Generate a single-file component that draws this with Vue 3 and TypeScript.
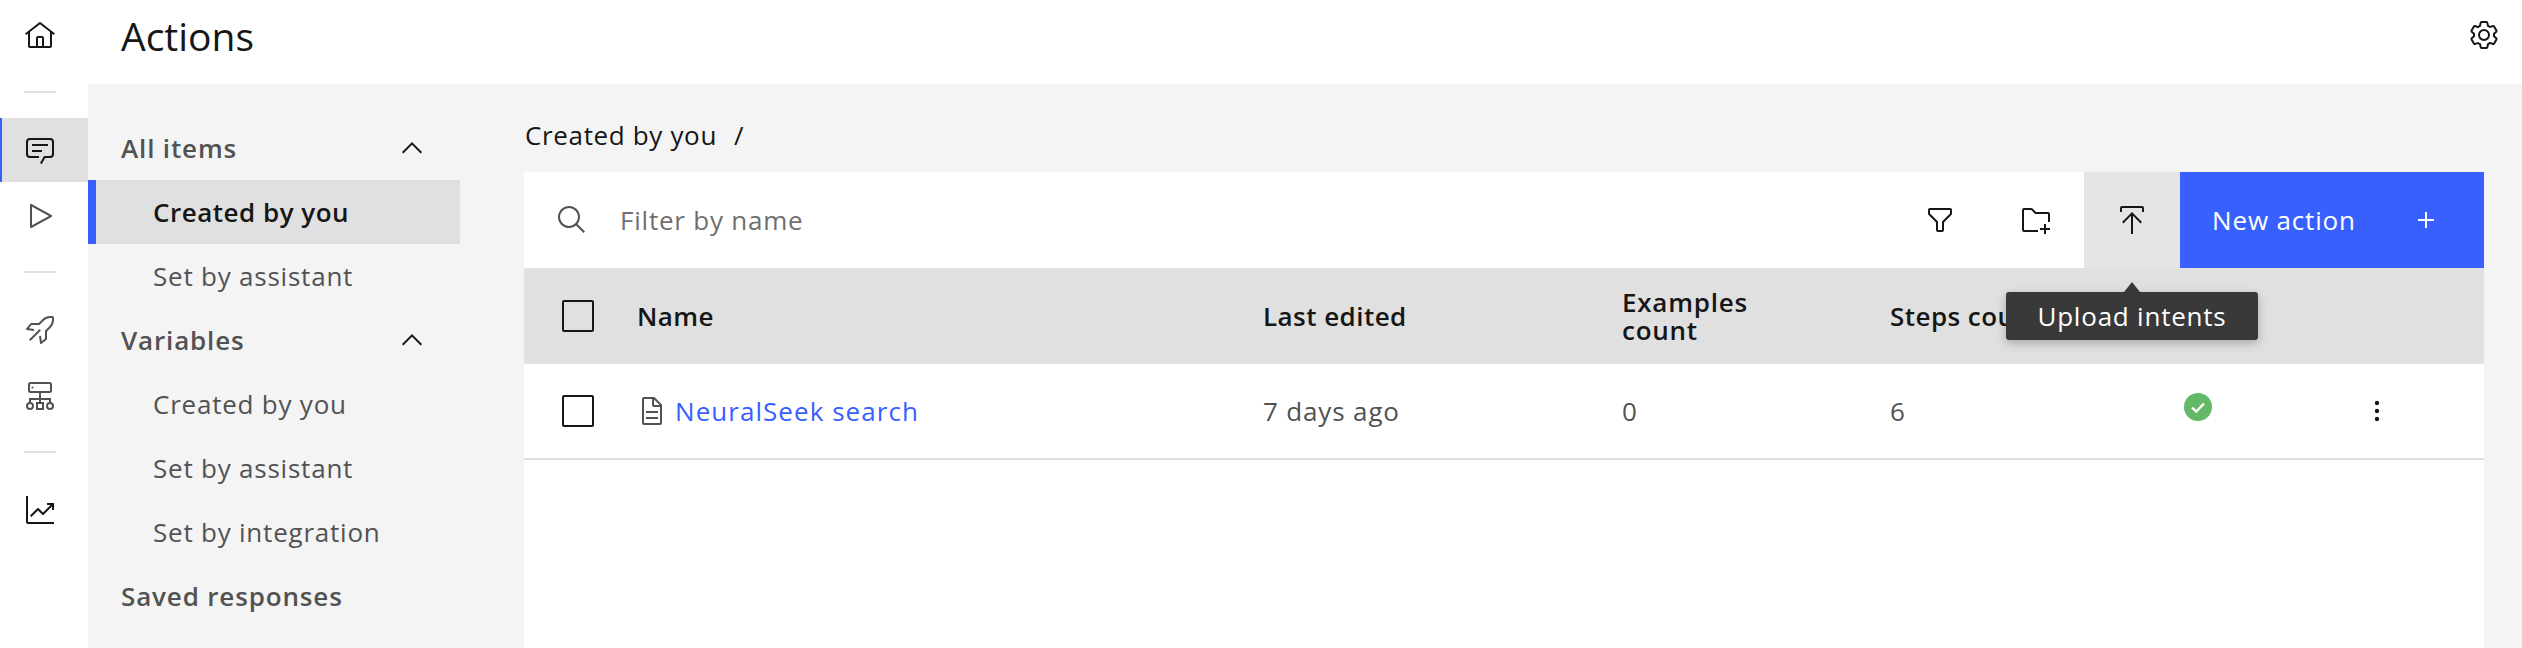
<template>
  <div class="page">
    <aside class="rail">
      <a class="rail-item">
        <svg class="ic dark" viewBox="0 0 32 32"><path d="M16.6123,2.2138a1.01,1.01,0,0,0-1.2427,0L1,13.4194l1.2427,1.5717L4,13.6209V26a2.0041,2.0041,0,0,0,2,2H26a2.0037,2.0037,0,0,0,2-2V13.63L29.7573,15,31,13.4282ZM18,26H14V18h4Zm2,0V18a2.0023,2.0023,0,0,0-2-2H14a2.002,2.002,0,0,0-2,2v8H6V12.0615l10-7.79,10,7.8005V26Z" /></svg>
      </a>
      <div class="rail-sep"></div>
      <a class="rail-item active">
        <svg class="ic dark" viewBox="0 0 32 32"><path d="M17.74,30,16,29l4-7h6a2,2,0,0,0,2-2V8a2,2,0,0,0-2-2H6A2,2,0,0,0,4,8V20a2,2,0,0,0,2,2h9v2H6a4,4,0,0,1-4-4V8A4,4,0,0,1,6,4H26a4,4,0,0,1,4,4V20a4,4,0,0,1-4,4H21.16Z" /><path d="M8 10H24V12H8z" /><path d="M8 16H18V18H8z" /></svg>
      </a>
      <a class="rail-item">
        <svg class="ic grey" viewBox="0 0 32 32"><path d="M7,28a1,1,0,0,1-1-1V5a1,1,0,0,1,1.4819-.8763l20,11a1,1,0,0,1,0,1.7525l-20,11A1.0005,1.0005,0,0,1,7,28ZM8,6.6909V25.3088L24.9248,16Z" /></svg>
      </a>
      <div class="rail-sep"></div>
      <a class="rail-item">
        <svg class="ic grey" viewBox="0 0 32 32"><path d="M17,30a1,1,0,0,1-.37-.07,1,1,0,0,1-.62-.79l-1-7,2-.28.75,5.27L21,24.52V17a1,1,0,0,1,.29-.71l4.07-4.07A8.94,8.94,0,0,0,28,5.86V4H26.14a8.94,8.94,0,0,0-6.36,2.64l-4.07,4.07A1,1,0,0,1,15,11H7.48L4.87,14.26l5.27.75-.28,2-7-1a1,1,0,0,1-.79-.62,1,1,0,0,1,.15-1l4-5A1,1,0,0,1,7,9h7.59l3.77-3.78A10.92,10.92,0,0,1,26.14,2H28a2,2,0,0,1,2,2V5.86a10.92,10.92,0,0,1-3.22,7.78L23,17.41V25a1,1,0,0,1-.38.78l-5,4A1,1,0,0,1,17,30Z" /><path d="M5.76 26.24 16.24 15.76" fill="none" stroke="#525252" stroke-width="2" /></svg>
      </a>
      <a class="rail-item">
        <svg class="ic grey" viewBox="0 0 32 32"><rect x="5" y="3" width="22" height="9" rx="1.5" fill="none" stroke="#525252" stroke-width="2" /><circle cx="8.5" cy="7.5" r="1" /><path d="M16 12V23M6 23V19H26V23" fill="none" stroke="#525252" stroke-width="2" /><circle cx="6" cy="26" r="3" fill="none" stroke="#525252" stroke-width="2" /><rect x="13" y="23" width="6" height="6" fill="none" stroke="#525252" stroke-width="2" /><circle cx="26" cy="26" r="3" fill="none" stroke="#525252" stroke-width="2" /></svg>
      </a>
      <div class="rail-sep"></div>
      <a class="rail-item">
        <svg class="ic dark" viewBox="0 0 32 32"><path d="M4,2H2V28a2,2,0,0,0,2,2H30V28H4Z" /><path d="M30,9H23v2h3.59L19,18.59l-4.29-4.3a1,1,0,0,0-1.42,0L6,21.59,7.41,23,14,16.41l4.29,4.3a1,1,0,0,0,1.42,0L28,12.41V16h2Z" /></svg>
      </a>
    </aside>

    <div class="main">
      <header class="topbar">
        <h1>Actions</h1>
        <svg class="ic dark" viewBox="0 0 32 32"><path d="M27,16.76c0-.25,0-.5,0-.76s0-.51,0-.77l1.92-1.68A2,2,0,0,0,29.3,11L26.94,7a2,2,0,0,0-1.73-1,2,2,0,0,0-.64.1l-2.43.82a11.35,11.35,0,0,0-1.31-.75l-.51-2.52a2,2,0,0,0-2-1.61H13.64a2,2,0,0,0-2,1.61l-.51,2.52a11.48,11.48,0,0,0-1.32.75L7.43,6.06A2,2,0,0,0,6.79,6,2,2,0,0,0,5.06,7L2.7,11a2,2,0,0,0,.41,2.51L5,15.24c0,.25,0,.5,0,.76s0,.51,0,.77L3.11,18.45A2,2,0,0,0,2.7,21L5.06,25a2,2,0,0,0,1.73,1,2,2,0,0,0,.64-.1l2.43-.82a11.35,11.35,0,0,0,1.31.75l.51,2.52a2,2,0,0,0,2,1.61h4.72a2,2,0,0,0,2-1.61l.51-2.52a11.48,11.48,0,0,0,1.32-.75l2.42.82a2,2,0,0,0,.64.1,2,2,0,0,0,1.73-1L29.3,21a2,2,0,0,0-.41-2.51ZM25.21,24l-3.43-1.16a8.86,8.86,0,0,1-2.71,1.57L18.36,28H13.64l-.71-3.55a9.36,9.36,0,0,1-2.7-1.57L6.79,24,4.43,20l2.72-2.4a8.9,8.9,0,0,1,0-3.13L4.43,12,6.79,8l3.43,1.16a8.86,8.86,0,0,1,2.71-1.57L13.64,4h4.72l.71,3.55a9.36,9.36,0,0,1,2.7,1.57L25.21,8,27.57,12l-2.72,2.4a8.9,8.9,0,0,1,0,3.13L27.57,20Z" /><path d="M16,22a6,6,0,1,1,6-6A5.94,5.94,0,0,1,16,22Zm0-10a3.91,3.91,0,0,0-4,4,3.91,3.91,0,0,0,4,4,3.91,3.91,0,0,0,4-4A3.91,3.91,0,0,0,16,12Z" /></svg>
      </header>

      <div class="body">
        <nav class="side">
          <template v-for="group in groups" :key="group.title">
            <div class="side-head">
              <span>{{ group.title }}</span>
              <svg v-if="group.items.length" class="ic dark" viewBox="0 0 32 32"><path d="M16 10 26 20 24.59 21.41 16 12.83 7.41 21.41 6 20 16 10z" /></svg>
            </div>
            <div
              v-for="item in group.items"
              :key="item"
              class="side-item"
              :class="{ current: group.title === 'All items' && item === 'Created by you' }"
            >
              {{ item }}
            </div>
          </template>
        </nav>

        <section class="content">
          <div class="crumb"><span>Created by you</span><span class="slash">/</span></div>

          <div class="panel">
            <div class="toolbar">
              <svg class="ic grey search" viewBox="0 0 32 32"><path d="M29,27.5859l-7.5521-7.5521a11.0177,11.0177,0,1,0-1.4141,1.4141L27.5859,29ZM4,13a9,9,0,1,1,9,9A9.01,9.01,0,0,1,4,13Z" /></svg>
              <span class="filter-text">Filter by name</span>
              <button class="tool">
                <svg class="ic dark" viewBox="0 0 32 32"><path d="M18,28H14a2,2,0,0,1-2-2V18.41L4.59,11A2,2,0,0,1,4,9.59V6A2,2,0,0,1,6,4H26a2,2,0,0,1,2,2V9.59A2,2,0,0,1,27.41,11L20,18.41V26A2,2,0,0,1,18,28ZM6,6V9.59l8,8V26h4V17.59l8-8V6Z" /></svg>
              </button>
              <button class="tool">
                <svg class="ic dark" viewBox="0 0 32 32"><path d="M30 24 26 24 26 20 24 20 24 24 20 24 20 26 24 26 24 30 26 30 26 26 30 26 30 24z" /><path d="M28,8H16L12.59,4.59A2,2,0,0,0,11.17,4H4A2,2,0,0,0,2,6V26a2,2,0,0,0,2,2H18V26H4V6h7.17l3.41,3.41.58.59H28v8h2V10A2,2,0,0,0,28,8Z" /></svg>
              </button>
              <button class="tool hovered">
                <svg class="ic dark" viewBox="0 0 32 32"><path d="M6,18,7.41,19.41,15,11.83V30h2V11.83l7.59,7.58L26,18,16,8,6,18Z" /><path d="M6,8V4H26V8h2V4a2,2,0,0,0-2-2H6A2,2,0,0,0,4,4V8Z" /></svg>
                <span class="tip">Upload intents</span>
              </button>
              <button class="primary">
                <span>New action</span>
                <svg class="ic white" viewBox="0 0 32 32"><path d="M17 15 17 8 15 8 15 15 8 15 8 17 15 17 15 24 17 24 17 17 24 17 24 15 17 15z" /></svg>
              </button>
            </div>

            <div class="row head">
              <div class="cell-check"><span class="check"></span></div>
              <div>Name</div>
              <div>Last edited</div>
              <div class="wrap">Examples<br />count</div>
              <div>Steps count</div>
              <div></div>
              <div></div>
            </div>

            <div v-for="row in rows" :key="row.name" class="row data">
              <div class="cell-check"><span class="check"></span></div>
              <div class="name">
                <svg class="ic grey" viewBox="0 0 32 32"><path d="M25.7,9.3l-7-7A.9087.9087,0,0,0,18,2H8A2.0058,2.0058,0,0,0,6,4V28a2.0058,2.0058,0,0,0,2,2H24a2.0058,2.0058,0,0,0,2-2V10A.9087.9087,0,0,0,25.7,9.3ZM18,4.4,23.6,10H18ZM24,28H8V4h8v6a2.0058,2.0058,0,0,0,2,2h6Z" /><path d="M10 22H22V24H10z" /><path d="M10 16H22V18H10z" /></svg>
                <a>{{ row.name }}</a>
              </div>
              <div>{{ row.edited }}</div>
              <div>{{ row.examples }}</div>
              <div>{{ row.steps }}</div>
              <div class="status">
                <svg width="28" height="28" viewBox="0 0 28 28"><circle cx="14" cy="14" r="14" fill="#63b967" /><path d="M8 14.5l4.2 4L20 10.5" fill="none" stroke="#fff" stroke-width="2.4" /></svg>
              </div>
              <div class="more">
                <svg class="ic dark" viewBox="0 0 32 32"><circle cx="16" cy="8" r="2.2" /><circle cx="16" cy="16" r="2.2" /><circle cx="16" cy="24" r="2.2" /></svg>
              </div>
            </div>
          </div>
        </section>
      </div>
    </div>
  </div>
</template>

<script setup lang="ts">
const groups = [
  { title: "All items", items: ["Created by you", "Set by assistant"] },
  { title: "Variables", items: ["Created by you", "Set by assistant", "Set by integration"] },
  { title: "Saved responses", items: [] as string[] },
];

const rows = [
  { name: "NeuralSeek search", edited: "7 days ago", examples: 0, steps: 6 },
];
</script>

<style>
html,
body {
  margin: 0;
  background: #fff;
  overflow: hidden;
}
</style>

<style scoped>
.page {
  display: flex;
  width: 2522px;
  height: 648px;
  overflow: hidden;
  font-family: "Open Sans", "Liberation Sans", sans-serif;
  font-size: 26px;
  letter-spacing: 0.78px;
  color: #525252;
}

.ic {
  width: 32px;
  height: 32px;
  flex: none;
  display: block;
}
.dark {
  fill: #161616;
}
.grey {
  fill: #525252;
}
.white {
  fill: #fff;
}

.rail {
  width: 88px;
  flex: none;
  padding-top: 4px;
  box-sizing: border-box;
}
.rail-item {
  height: 64px;
  margin-bottom: 2px;
  padding-right: 8px;
  display: flex;
  align-items: center;
  justify-content: center;
  box-sizing: border-box;
}
.rail-item.active {
  background: #e0e0e0;
  border-left: 2px solid #3760ff;
  padding-right: 10px;
}
.rail-sep {
  width: 32px;
  height: 2px;
  margin: 23px 24px 25px;
  background: #e0e0e0;
}

.main {
  flex: 1;
  display: flex;
  flex-direction: column;
  min-width: 0;
}
.topbar {
  height: 84px;
  flex: none;
  display: flex;
  align-items: center;
  justify-content: space-between;
  padding: 0 22px 14px 33px;
  box-sizing: border-box;
}
.topbar h1 {
  margin: 0;
  font-size: 39px;
  font-weight: 400;
  letter-spacing: 0;
  color: #161616;
}

.body {
  flex: 1;
  display: flex;
  background: #f4f4f4;
}
.side {
  width: 372px;
  flex: none;
  padding-top: 32px;
  margin-right: 64px;
  box-sizing: border-box;
}
.side-head {
  height: 64px;
  display: flex;
  align-items: center;
  justify-content: space-between;
  padding: 0 32px 0 33px;
  font-weight: 600;
  letter-spacing: 0.85px;
}
.side-item {
  height: 64px;
  display: flex;
  align-items: center;
  padding-left: 65px;
  box-sizing: border-box;
}
.side-item.current {
  background: #e0e0e0;
  border-left: 8px solid #3760ff;
  padding-left: 57px;
  color: #161616;
  font-weight: 600;
  letter-spacing: 0.5px;
}

.content {
  flex: 1;
  min-width: 0;
  margin-right: 38px;
}
.crumb {
  height: 88px;
  padding: 14px 0 0 1px;
  display: flex;
  align-items: center;
  gap: 17px;
  color: #161616;
  box-sizing: border-box;
  letter-spacing: 0.65px;
}
.panel {
  background: #fff;
  height: 476px;
}
.toolbar {
  height: 96px;
  display: flex;
  align-items: center;
}
.search {
  margin-left: 32px;
}
.filter-text {
  flex: 1;
  margin-left: 32px;
  color: #6f6f6f;
}
.tool {
  position: relative;
  width: 96px;
  height: 96px;
  padding: 0;
  border: 0;
  background: none;
  display: flex;
  align-items: center;
  justify-content: center;
  font: inherit;
  letter-spacing: inherit;
}
.tool.hovered {
  background: #e5e5e5;
}
.tip {
  position: absolute;
  top: 120px;
  left: 50%;
  transform: translateX(-50%);
  height: 48px;
  width: 252px;
  display: flex;
  align-items: center;
  justify-content: center;
  background: #393939;
  color: #fff;
  border-radius: 3px;
  box-shadow: 0 3px 10px rgba(0, 0, 0, 0.25);
  z-index: 2;
}
.tip::before {
  content: "";
  position: absolute;
  top: -10px;
  left: 50%;
  margin-left: -8px;
  border: 8px solid transparent;
  border-top: 0;
  border-bottom: 10px solid #393939;
}
.primary {
  width: 304px;
  height: 96px;
  padding: 0 42px 0 32px;
  border: 0;
  display: flex;
  align-items: center;
  justify-content: space-between;
  background: #3760ff;
  color: #fff;
  font: inherit;
  letter-spacing: 0.85px;
  box-sizing: border-box;
}

.row {
  display: grid;
  grid-template-columns: 113px 626px 359px 268px 276px 64px 1fr;
  align-items: center;
  height: 96px;
  box-sizing: border-box;
}
.row.head {
  background: #e0e0e0;
  color: #161616;
  font-weight: 600;
  letter-spacing: 0.45px;
}
.row.data {
  border-bottom: 2px solid #e0e0e0;
  letter-spacing: 0.85px;
}
.wrap {
  line-height: 28px;
  letter-spacing: 0.75px;
}
.cell-check {
  padding-left: 38px;
}
.check {
  display: block;
  width: 32px;
  height: 32px;
  border: 2px solid #161616;
  border-radius: 2px;
  box-sizing: border-box;
}
.name {
  display: flex;
  align-items: center;
  gap: 7px;
}
.name .ic {
  margin-left: -1px;
}
.name a {
  color: #3760ff;
  letter-spacing: 1.05px;
}
.status {
  display: flex;
  justify-content: center;
  margin-top: -8px;
}
.more {
  padding-left: 131px;
}
</style>
